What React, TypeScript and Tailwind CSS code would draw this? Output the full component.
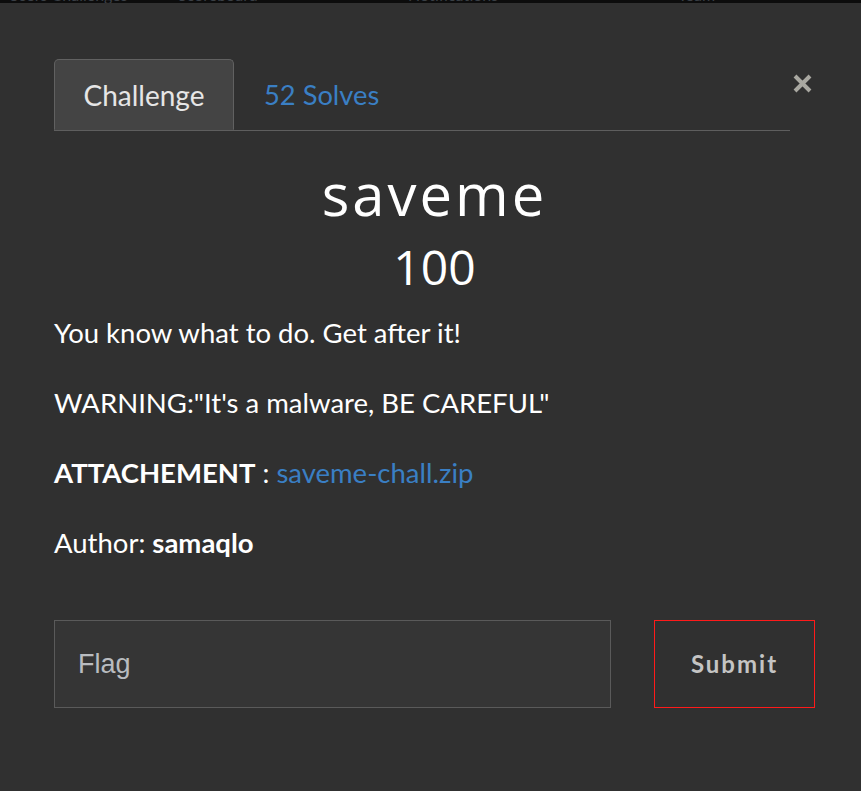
import React from "react";

const navBits = [
  { w: "w-[130px]", t: "Users  Challenges" },
  { w: "w-[190px]", t: "Scoreboard" },
  { w: "w-[230px]", t: "Notifications" },
  { w: "w-[120px]", t: "Team" },
];

export default function App() {
  return (
    <div className="w-full h-[791px] bg-[#303030] overflow-hidden text-white" style={{ fontFamily: "Lato, 'Noto Sans', sans-serif" }}>
      {/* page behind the modal, only the last row of pixels shows */}
      <div className="h-[3px] bg-[#0c0c0c] overflow-hidden flex gap-10 px-2">
        {navBits.map(b => (
          <span key={b.t} className={`${b.w} -mt-[13px] text-[16px] leading-none text-[#3a3f45] whitespace-nowrap`}>{b.t}</span>
        ))}
      </div>

      <div className="pl-[54px] pr-[46px] pt-[56px]">
        {/* tabs */}
        <div className="flex items-start">
          <ul className="flex w-[736px] border-b border-[#5e5e5e]">
            <li className="-mb-px w-[180px] h-[71px] flex items-center justify-center bg-[#444444] border border-[#616161] border-b-[#444444] rounded-t-[5px] text-[28px] text-[#e6e6e6]">
              Challenge
            </li>
            <li className="h-[71px] flex items-center pt-[2px] px-[30px] text-[27.3px] text-[#3a7fc4]">52 Solves</li>
          </ul>
          <button className="ml-[2px] mt-[14px] w-[20px] h-[20px] flex items-center justify-center">
            <svg width="19" height="19" viewBox="0 0 19 19">
              <path d="M2 2 L17 17 M17 2 L2 17" stroke="#a9a8a1" strokeWidth="4" />
            </svg>
          </button>
        </div>

        {/* header */}
        <div className="text-center mt-[22px]" style={{ fontFamily: "'Open Sans', sans-serif" }}>
          <h2 className="text-[58px] leading-[82px] tracking-[3px] font-normal">saveme</h2>
          <h3 className="text-[48px] leading-[64px] font-normal">100</h3>
        </div>

        {/* description */}
        <div className="mt-[16px] text-[27.5px] leading-[36px] flex flex-col gap-[34px]">
          <p>You know what to do. Get after it!</p>
          <p>WARNING:"It's a malware, BE CAREFUL"</p>
          <p>
            <span className="font-bold">ATTACHEMENT</span> : <a className="text-[#3a7fc4]">saveme-chall.zip</a>
          </p>
          <p>
            Author: <span className="font-bold">samaqlo</span>
          </p>
        </div>

        {/* flag form */}
        <div className="mt-[59px] flex gap-[43px]">
          <div className="w-[557px] h-[88px] border border-[#5a5a5a] bg-[#353535] flex items-center px-[23px]">
            <span className="text-[27px] text-[#b9bcc0]" style={{ fontFamily: "'Liberation Sans', Arial, sans-serif" }}>Flag</span>
          </div>
          <button className="w-[161px] h-[88px] border border-[#ff1a1a] flex items-center justify-center text-[24px] font-bold tracking-[2px] text-[#c4c4c4]">
            Submit
          </button>
        </div>
      </div>
    </div>
  );
}
